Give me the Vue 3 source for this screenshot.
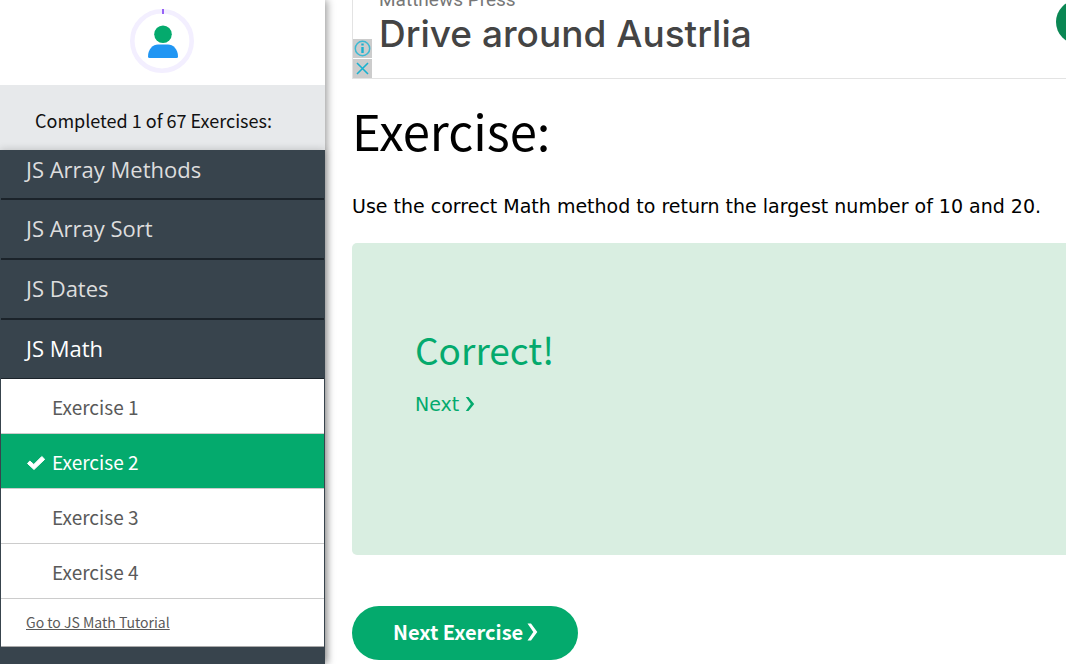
<script setup>
const topics = [
  { name: 'JS Array Methods', open: false },
  { name: 'JS Array Sort', open: false },
  { name: 'JS Dates', open: false },
  { name: 'JS Math', open: true },
]
const exercises = [
  { name: 'Exercise 1', done: false },
  { name: 'Exercise 2', done: true },
  { name: 'Exercise 3', done: false },
  { name: 'Exercise 4', done: false },
]
</script>

<template>
  <div class="page">
    <aside class="sidebar">
      <a class="profile" href="#" aria-label="Profile">
        <svg width="64" height="64" viewBox="0 0 64 64" aria-hidden="true">
          <circle cx="32" cy="32" r="29.7" fill="#fff" stroke="#f3efff" stroke-width="4.6" />
          <path d="M33 0v5" stroke="#9763f6" stroke-width="2" />
          <circle cx="33" cy="25.3" r="8.8" fill="#04aa6d" />
          <path d="M18 47.5C18 40 23 35.5 28 35.5h10c5 0 10 4.500 10 12Q48 49 46.500 49h-27Q18 49 18 47.500Z" fill="#2196f3" />
        </svg>
      </a>
      <p class="status">Completed 1 of 67 Exercises:</p>
      <nav class="menu">
        <button v-for="t in topics" :key="t.name" class="topic" :class="{ open: t.open }" type="button">
          {{ t.name }}
        </button>
        <div class="sub">
          <a v-for="e in exercises" :key="e.name" class="exercise" :class="{ done: e.done }" href="#">
            <span class="mark">
              <svg v-if="e.done" width="20" height="16" viewBox="0 0 20 16" aria-hidden="true">
                <path d="M1.500 8.500 3.800 6 7.800 9.500 15.800 1.500 18.700 4.300 8 14.500Z" fill="#fff" stroke="#fff" stroke-width="1" stroke-linejoin="round" />
              </svg>
            </span>
            <span class="label">{{ e.name }}</span>
          </a>
          <div class="tutorial"><a href="#">Go to JS Math Tutorial</a></div>
        </div>
      </nav>
    </aside>

    <main class="content">
      <section class="ad">
        <div class="adchoices">
          <button type="button" aria-label="Ad information">
            <svg width="19" height="19" viewBox="0 0 19 19" aria-hidden="true">
              <circle cx="9.500" cy="9.500" r="7.200" fill="none" stroke="#3bb9d2" stroke-width="1.500" />
              <path d="M9.500 8v6M9.500 4.500v2" stroke="#19b1cf" stroke-width="2.400" />
            </svg>
          </button>
          <button type="button" aria-label="Close ad">
            <svg width="19" height="19" viewBox="0 0 19 19" aria-hidden="true">
              <path d="M4 4 15 15M15 4 4 15" stroke="#19b1cf" stroke-width="1.600" />
            </svg>
          </button>
        </div>
        <div class="adtext">
          <span class="advertiser">Matthews Press</span>
          <a class="headline" href="#">Drive around Austrlia</a>
        </div>
        <a class="adgo" href="#" aria-label="Open"></a>
      </section>

      <h1>Exercise:</h1>
      <p class="task">Use the correct Math method to return the largest number of 10 and 20.</p>

      <section class="result">
        <h2>Correct!</h2>
        <a href="#">Next
          <svg width="10" height="16" viewBox="0 0 10 16" aria-hidden="true">
            <path d="M.8 1H3.500L9.200 8 3.500 15H.8L5.800 8Z" fill="currentColor" />
          </svg>
        </a>
      </section>

      <button class="next" type="button">Next Exercise
        <svg width="11" height="18" viewBox="0 0 11 18" aria-hidden="true">
          <path d="M.5 .5H4L10.300 9 4 17.500H.5L6.300 9Z" fill="currentColor" />
        </svg>
      </button>
    </main>
  </div>
</template>

<style>
body {
  margin: 0;
  background: #fff;
}
</style>

<style scoped>
.page {
  display: flex;
  height: 100vh;
  overflow: hidden;
  font-family: "Noto Sans CJK JP", "Noto Sans", sans-serif;
}
.sidebar {
  flex: none;
  display: flex;
  flex-direction: column;
  width: 325px;
  box-shadow: 2px 0 8px rgba(0, 0, 0, 0.4);
}
.profile {
  flex: none;
  display: flex;
  justify-content: center;
  align-items: flex-end;
  height: 73px;
  padding: 0 1px 12px 0;
  background: #fff;
}
.status {
  flex: none;
  margin: 0;
  padding: 8px 35px 2px;
  height: 55px;
  line-height: 55px;
  font-size: 18px;
  color: #111;
  background: #e7e9eb;
}
.menu {
  flex: 1;
  display: flex;
  flex-direction: column;
  padding: 0 1px;
  background: #38444d;
  box-shadow: 0 0 8px rgba(0, 0, 0, 0.2);
}
.topic {
  flex: none;
  height: 60px;
  padding: 0 25px 2px;
  border: 0;
  border-bottom: 2px solid #1b232a;
  background: #38444d;
  color: #ddd;
  font: 22px/56px "Open Sans", "Noto Sans", sans-serif;
  text-align: left;
}
.topic:first-child {
  height: 50px;
  line-height: 38px;
  padding-bottom: 10px;
}
.topic.open {
  height: 59px;
  color: #fff;
  border-bottom-width: 1px;
}
.sub {
  background: #fff;
  border-bottom: 1px solid #aaa;
}
.exercise {
  display: flex;
  align-items: center;
  height: 50px;
  padding: 4px 0 0 25px;
  border-bottom: 1px solid #ccc;
  color: #5a5a5a;
  font-size: 19px;
  text-decoration: none;
}
.exercise.done {
  background: #04aa6d;
  color: #fff;
}
.mark {
  display: flex;
  width: 26px;
}
.label {
  padding-bottom: 3px;
}
.tutorial {
  padding: 0 25px;
  line-height: 47px;
  font-size: 14px;
}
.tutorial a {
  color: #5a5a5a;
}
.content {
  flex: 1;
  min-width: 0;
  padding-left: 27px;
}
.ad {
  position: relative;
  display: flex;
  align-items: flex-end;
  height: 78px;
  border-left: 1px solid #e3e3e3;
  border-bottom: 1px solid #e3e3e3;
}
.adchoices {
  display: flex;
  flex-direction: column;
  gap: 1px;
}
.adchoices button {
  display: flex;
  padding: 0;
  border: 0;
  background: #ccc;
}
.adtext {
  display: flex;
  flex-direction: column;
  padding: 0 0 20px 7px;
}
.advertiser {
  font: 19px/20px Roboto, sans-serif;
  color: #777;
}
.headline {
  font: 500 37px/48px Inter, sans-serif;
  color: #444;
  text-decoration: none;
}
.adgo {
  position: absolute;
  right: -34px;
  top: 0;
  width: 44px;
  height: 44px;
  border-radius: 50%;
  background: #0a8754;
}
h1 {
  margin: 16px 0 0;
  font-size: 49px;
  line-height: 70px;
  font-weight: 400;
  color: #000;
}
.task {
  margin: 26px 0 22px;
  font: 19px/30px "DejaVu Sans", sans-serif;
  color: #000;
}
.result {
  height: 232px;
  padding: 80px 63px 0;
  border-radius: 5px 0 0 5px;
  background: #d9eee1;
  color: #04aa6d;
}
.result h2 {
  margin: 0;
  font-size: 37px;
  line-height: 52px;
  font-weight: 400;
}
.result a {
  display: flex;
  align-items: center;
  gap: 6px;
  margin-top: 14px;
  font: 19px/30px "DejaVu Sans", sans-serif;
  color: #04aa6d;
  text-decoration: none;
}
.next {
  display: flex;
  align-items: center;
  gap: 4px;
  margin-top: 51px;
  padding: 0 40px 2px 41px;
  height: 54px;
  border: 0;
  border-radius: 27px;
  background: #04aa6d;
  color: #fff;
  font: 700 20px/52px "Noto Sans CJK JP", "Noto Sans", sans-serif;
}
</style>
